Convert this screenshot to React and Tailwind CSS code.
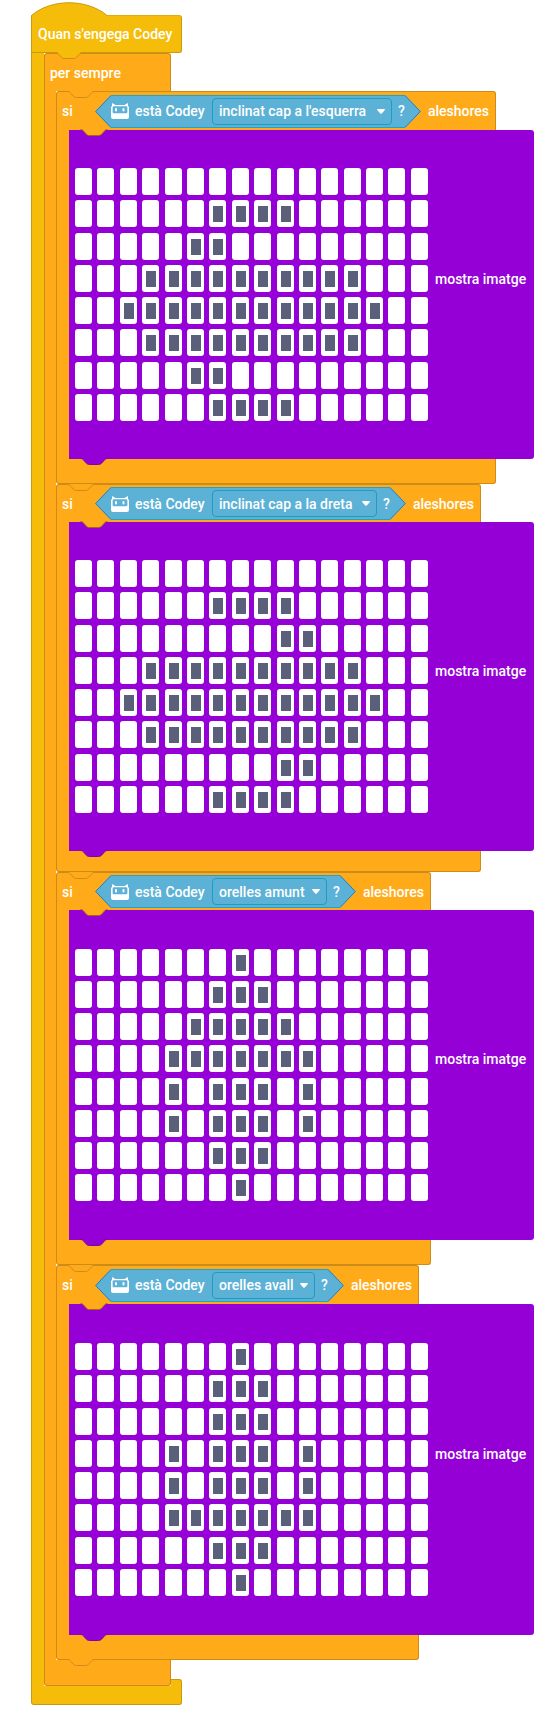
import React from "react";

const range = (a, b) => Array.from({ length: b - a + 1 }, (_, i) => a + i);
const ears = [4, 6, 7, 8, 10];

const LEFT = [[], range(6, 9), [5, 6], range(3, 12), range(2, 13), range(3, 12), [5, 6], range(6, 9)];
const RIGHT = [[], range(6, 9), [9, 10], range(3, 12), range(2, 13), range(3, 12), [9, 10], range(6, 9)];
const UP = [[7], range(6, 8), range(5, 9), range(4, 10), ears, ears, range(6, 8), [7]];
const DOWN = [[7], range(6, 8), range(6, 8), ears, ears, range(4, 10), range(6, 8), [7]];

const OPTIONS = ["inclinat cap a l'esquerra", "inclinat cap a la dreta", "orelles amunt", "orelles avall"];

const BRANCHES = [
  { option: OPTIONS[0], rows: LEFT, width: "w-[440px]", head: "h-[39px]", body: "min-h-[329px]", foot: "h-[25px]" },
  { option: OPTIONS[1], rows: RIGHT, width: "w-[425px]", head: "h-[38px]", body: "min-h-[329px]", foot: "h-[21px]" },
  { option: OPTIONS[2], rows: UP, width: "w-[375px]", head: "h-[38px]", body: "min-h-[330px]", foot: "h-[25px]" },
  { option: OPTIONS[3], rows: DOWN, width: "w-[363px]", head: "h-[39px]", body: "min-h-[331px]", foot: "h-[25px]" },
];

function Notch({ className }) {
  return (
    <svg viewBox="0 0 28 8" className={"absolute z-10 h-2 w-7 " + className} aria-hidden="true">
      <path d="M0 0H0.5C2.5 0.5 3 1.5 4 2.5L6 4.8C7 6 7.8 6.5 9.5 6.5H18.5C20 6.5 21 6 22 4.8L24 2.5C25 1.5 25.5 .5 27.5 0Z" stroke="none" />
      <path d="M0.5 .5C2.5 .5 3 1.5 4 2.5L6 4.8C7 6 7.8 6.5 9.5 6.5H18.5C20 6.5 21 6 22 4.8L24 2.5C25 1.5 25.5 .5 27.5 .5" fill="none" />
    </svg>
  );
}

function CodeyIcon() {
  return (
    <svg viewBox="0 0 18 16" className="h-4 w-[18px] shrink-0" aria-hidden="true">
      <path fill="#fff" fillRule="evenodd" d="M1 0L4.5 2H13.5L17 0V3L18 4V14Q18 16 16 16H2Q0 16 0 14V4L1 3ZM3 3.2Q1.6 3.2 1.6 4.5V9Q1.6 10.2 3 10.2H15Q16.4 10.2 16.4 9V4.500Q16.4 3.2 15 3.2Z" />
      <rect x="4" y="5" width="2" height="3.4" rx="1" fill="#fff" />
      <rect x="11.500" y="5" width="2" height="3.4" rx="1" fill="#fff" />
    </svg>
  );
}

function Condition({ option }) {
  return (
    <div className="flex h-[33px] min-w-0 flex-1 items-stretch">
      <svg viewBox="0 0 16 33" className="h-[33px] w-4 shrink-0" aria-hidden="true">
        <path d="M16 0L0 16.5L16 33Z" fill="#5cb1d6" />
        <path d="M16 .5L.7 16.5L16 32.5" fill="none" stroke="#2e7eb8" />
      </svg>
      <div className="flex min-w-0 flex-1 items-center border-y border-[#2aa0c2] bg-[#5cb1d6]">
        <CodeyIcon />
        <span className="w-[83px] shrink-0 whitespace-nowrap pl-1.5">està Codey</span>
        <div className="relative h-[27px] min-w-0 flex-1">
          <select
            aria-label="Estat de Codey"
            defaultValue={option}
            className="h-full w-full cursor-pointer appearance-none rounded-[4px] border border-[#1f9dc0] bg-[#5cb1d6] pl-1.5 text-white outline-none"
          >
            {OPTIONS.map((o) => (
              <option key={o}>{o}</option>
            ))}
          </select>
          <svg viewBox="0 0 8 5" className="pointer-events-none absolute right-[7px] top-[11px] h-[5px] w-2" aria-hidden="true">
            <path d="M0 .5Q0 0 .7 0H7.3Q8 0 8 .5Q8 1 4.5 4.7Q4 5 3.5 4.7Q0 1 0 .5Z" fill="#fff" />
          </svg>
        </div>
        <span className="w-[13px] shrink-0 pl-1.5">?</span>
      </div>
      <svg viewBox="0 0 16 33" className="h-[33px] w-4 shrink-0" aria-hidden="true">
        <path d="M0 0L16 16.5L0 33Z" fill="#5cb1d6" />
        <path d="M0 .5L15.3 16.5L0 32.5" fill="none" stroke="#2e7eb8" />
      </svg>
    </div>
  );
}

function ShowImage({ rows, body }) {
  return (
    <div className={"relative flex items-center gap-[7px] rounded-r-[3px] bg-[#9400d6] px-1.5 " + body}>
      <Notch className="left-[11px] top-[-1px] fill-[#ffab19] stroke-[#a8621c]" />
      <div className="flex h-[253px] w-[353px] shrink-0 flex-col justify-between">
        {rows.map((on, r) => (
          <div key={r} className="flex justify-between">
            {range(0, 15).map((c) => (
              <input
                key={c}
                type="checkbox"
                aria-label={"fila " + (r + 1) + ", columna " + (c + 1)}
                defaultChecked={on.includes(c)}
                className="block h-[27px] w-[17px] cursor-pointer appearance-none rounded-[3px] border-t-[6px] border-r-[3px] border-b-[5px] border-l-[4px] border-white bg-white checked:bg-[#5a5f7a]"
              />
            ))}
          </div>
        ))}
      </div>
      <span className="min-w-[93px] whitespace-nowrap pb-8">mostra imatge</span>
      <Notch className="left-[11px] top-full -mt-px fill-[#9400d6] stroke-[#7a05a0]" />
    </div>
  );
}

function Branch({ option, rows, width, head, body, foot }) {
  return (
    <section className="relative w-fit">
      <Notch className="left-[11px] top-0 fill-[#ffab19] stroke-[#cf8b17]" />
      <header className={"flex items-center rounded-t-[3px] border border-b-0 border-[#cf8b17] bg-[#ffab19] px-[5px] " + head + " " + width}>
        <span className="w-[33px] shrink-0">si</span>
        <Condition option={option} />
        <span className="w-[69px] shrink-0 whitespace-nowrap pl-[7px]">aleshores</span>
      </header>
      <div className="flex">
        <div className="w-[13px] shrink-0 border-l border-[#cf8b17] bg-[#ffab19]" />
        <ShowImage rows={rows} body={body} />
      </div>
      <div className={"rounded-b-[3px] border border-t-0 border-[#cf8b17] bg-[#ffab19] " + width + " " + foot} />
    </section>
  );
}

export default function App() {
  return (
    <main className="min-h-screen bg-white pl-[31px] pt-[2px] font-['Roboto','Noto_Sans',sans-serif] text-[14px] font-medium leading-5 text-white">
      <svg viewBox="0 0 78 14" className="block h-[14px] w-[78px]" aria-hidden="true">
        <path d="M.5 14V13.5C20 -3.5 56 -3.5 76 13.5L77 14Z" fill="#f5bd0a" />
        <path d="M.5 14V13.5C20 -3.5 56 -3.5 76 13.5" fill="none" stroke="#c99a10" />
      </svg>
      <header className="-mt-px flex h-[38px] w-[151px] items-center whitespace-nowrap rounded-r-[3px] border border-[#c99a10] border-t-[#e0ab0c] bg-[#f5bd0a] pl-1.5">
        Quan s'engega Codey
      </header>
      <div className="flex">
        <div className="w-[13px] shrink-0 border-l border-[#c99a10] bg-[#f5bd0a]" />
        <section className="relative">
          <Notch className="left-[11px] top-[-1px] fill-[#f5bd0a] stroke-[#cf8b17]" />
          <header className="flex h-[38px] w-[127px] items-center rounded-t-[3px] border border-b-0 border-[#cf8b17] bg-[#ffab19] pl-[5px]">per sempre</header>
          <div className="flex">
            <div className="w-3 shrink-0 border-l border-[#cf8b17] bg-[#ffab19]" />
            <div>
              {BRANCHES.map((b) => (
                <Branch key={b.option} {...b} />
              ))}
            </div>
          </div>
          <div className="relative h-[26px] w-[127px] rounded-b-[3px] border border-t-0 border-[#cf8b17] bg-[#ffab19]">
            <Notch className="left-[22px] top-[-1px] fill-[#ffab19] stroke-[#cf8b17]" />
          </div>
        </section>
      </div>
      <div className="relative h-[19px] w-[151px] rounded-b-[3px] border border-t-0 border-[#c99a10] bg-[#f5bd0a]">
        <div className="absolute bottom-full right-[-1px] h-[7px] w-[11px] rounded-tr-[3px] border-r border-t border-[#c99a10] bg-[#f5bd0a]" />
      </div>
    </main>
  );
}
